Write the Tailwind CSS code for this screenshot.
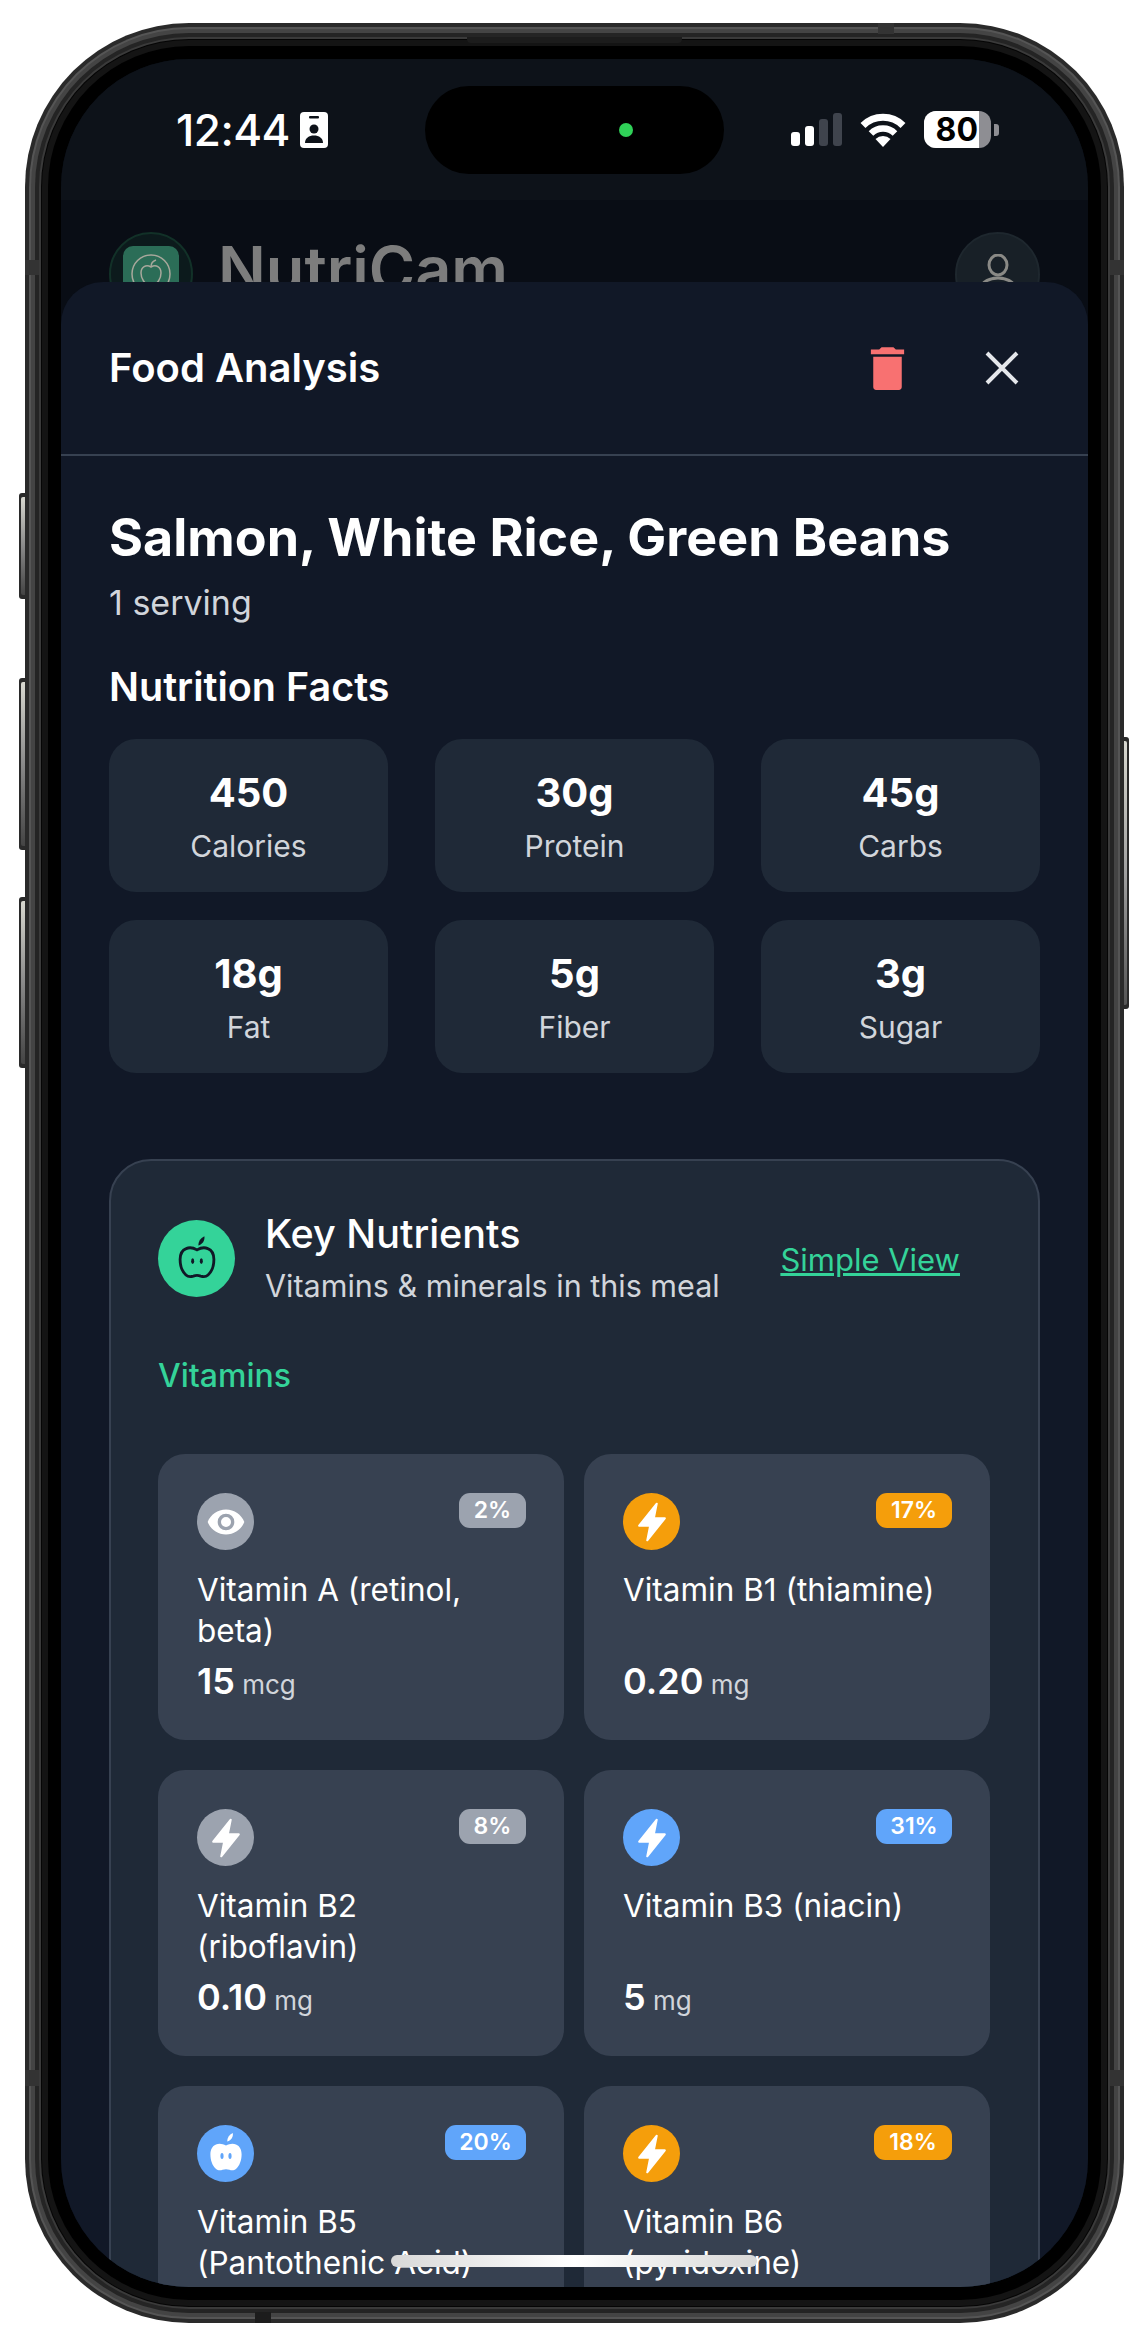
<!doctype html>
<html>
<head>
<meta charset="utf-8" />
<title>NutriCam</title>
<script src="https://cdn.jsdelivr.net/npm/@tailwindcss/browser@4"></script>
</head>
<body class="bg-white font-[family-name:Inter,sans-serif] w-[1148px] h-[2346px] overflow-hidden">
<div class="relative w-[1148px] h-[2346px] pl-[61px] pt-[59px]">

  <!-- side buttons -->
  <div class="absolute left-[19px] top-[493px] w-[8px] h-[106px] rounded-l-[3px] bg-[#2a2a2a] pl-[2px] py-[4px]"><div class="w-[5px] h-full rounded-l-[2px] bg-gradient-to-b from-[#d8d8d0] via-[#8a8a8a] to-[#444]"></div></div>
  <div class="absolute left-[19px] top-[678px] w-[8px] h-[172px] rounded-l-[3px] bg-[#2a2a2a] pl-[2px] py-[4px]"><div class="w-[5px] h-full rounded-l-[2px] bg-gradient-to-b from-[#d8d8d0] via-[#8a8a8a] to-[#444]"></div></div>
  <div class="absolute left-[19px] top-[897px] w-[8px] h-[171px] rounded-l-[3px] bg-[#2a2a2a] pl-[2px] py-[4px]"><div class="w-[5px] h-full rounded-l-[2px] bg-gradient-to-b from-[#d8d8d0] via-[#8a8a8a] to-[#444]"></div></div>
  <div class="absolute left-[1122px] top-[737px] w-[7px] h-[272px] rounded-r-[3px] bg-[#2a2a2a] pr-[2px] py-[4px]"><div class="w-[5px] h-full rounded-r-[2px] bg-gradient-to-b from-[#d8d8d0] via-[#a0a0a0] to-[#555]"></div></div>

  <!-- screen, the bezel is a stack of rings -->
  <div class="relative z-10 w-[1027px] h-[2228px] rounded-[128px] overflow-hidden bg-[#090d15] flex flex-col shadow-[0_0_0_13px_#000,0_0_0_19px_#141414,0_0_0_20px_#050505,0_0_0_22px_#3a3a3a,0_0_0_26px_#242424,0_0_0_30px_#444,0_0_0_32px_#555,0_0_0_36px_#2a2a2a]">

    <!-- status bar -->
    <div class="h-[141px] shrink-0 bg-[#0d1219] flex items-center justify-between pl-[115px] pr-[89px] text-white">
      <div class="flex items-center gap-[10px]">
        <span class="text-[44px] leading-none font-medium tracking-[-0.5px]">12:44</span>
        <svg class="w-[28px] h-[36px]" viewBox="0 0 28 36"><rect width="28" height="36" rx="4" fill="#fff"/><rect x="9" y="4" width="10" height="2.5" rx="1" fill="#0d1219"/><circle cx="14" cy="17" r="4.5" fill="#0d1219"/><path d="M5 31c0-5 4-7.500 9-7.500s9 2.500 9 7.500z" fill="#0d1219"/></svg>
      </div>
      <div class="flex items-center">
        <div class="flex items-end gap-[5px] h-[33px] mr-[18px]">
          <div class="w-[9px] h-[14px] rounded-[3px] bg-white"></div>
          <div class="w-[9px] h-[20px] rounded-[3px] bg-white"></div>
          <div class="w-[9px] h-[27px] rounded-[3px] bg-[#3f444d]"></div>
          <div class="w-[9px] h-[33px] rounded-[3px] bg-[#3f444d]"></div>
        </div>
        <svg class="w-[46px] h-[34px] mr-[18px]" viewBox="0 0 46 34" fill="none"><path d="M3 12.500A28.500 28.500 0 0 1 43 12.500" stroke="#fff" stroke-width="7"/><path d="M11 20.500A17 17 0 0 1 35 20.500" stroke="#fff" stroke-width="6.500"/><path d="M23 34L15.500 26A11 11 0 0 1 30.500 26z" fill="#fff"/></svg>
        <div class="flex items-center gap-[3px]">
          <div class="relative w-[67px] h-[37px] rounded-[12px] overflow-hidden bg-[#8e8e93]">
            <div class="w-[55px] h-full bg-white flex items-center justify-end pr-[1px]"><span class="text-[32px] leading-none font-bold text-black">80</span></div>
          </div>
          <div class="w-[5px] h-[12px] rounded-r-[3px] bg-[#8e8e93]"></div>
        </div>
      </div>
    </div>

    <!-- dynamic island -->
    <div class="absolute left-[364px] top-[27px] w-[299px] h-[88px] rounded-full bg-black z-20">
      <div class="absolute left-[194px] top-[37px] w-[14px] h-[14px] rounded-full bg-[#30d158]"></div>
    </div>

    <!-- app header behind the sheet -->
    <div class="h-[82px] shrink-0 overflow-hidden flex items-start justify-between px-[48px] pt-[32px]">
      <div class="flex items-start">
        <div class="w-[84px] h-[84px] rounded-full border-[2px] border-[#123128] bg-[#0c1a1c] flex items-center justify-center">
          <div class="w-[56px] h-[56px] rounded-[10px] bg-[#2b6d57] flex items-center justify-center">
            <svg class="w-[42px] h-[42px]" viewBox="0 0 42 42" fill="none" stroke="#a8a89c" stroke-width="1.500"><circle cx="21" cy="21" r="19"/><path d="M21 14c-5-3-10 0-10 6 0 6 4 11 7 11 1 0 2-.5 3-.5s2 .5 3 .5c3 0 7-5 7-11 0-6-5-9-10-6z"/><path d="M21 14c0-4 2-6 5-7"/></svg>
          </div>
        </div>
        <span class="ml-[25px] -mt-[3px] text-[63px] leading-[80px] font-semibold text-[#7d7d7d]">NutriCam</span>
      </div>
      <div class="w-[85px] h-[85px] rounded-full bg-[#182027] border-[2px] border-[#1e272e] flex justify-center pt-[20px]">
        <svg class="w-[50px] h-[60px]" viewBox="0 0 50 60" fill="none" stroke="#8a8a86" stroke-width="3"><ellipse cx="25" cy="11" rx="9" ry="10"/><path d="M6 40c0-10 8-16 19-16s19 6 19 16"/></svg>
      </div>
    </div>

    <!-- sheet -->
    <div class="flex-1 min-h-0 bg-[#111827] rounded-t-[42px] flex flex-col">
      <div class="h-[174px] shrink-0 border-b-[2px] border-[#374151] flex items-center justify-between pl-[48px] pr-[69px]">
        <h2 class="text-[40px] leading-[48px] font-semibold text-white">Food Analysis</h2>
        <div class="flex items-center gap-[69px]">
          <svg class="w-[57px] h-[57px]" viewBox="0 0 24 24" fill="#f87171"><path d="M6 19.800C6 20.500 6.500 21 7.200 21h9.600c.7 0 1.200-.5 1.200-1.200V7H6zM19 4h-3.500l-1-1h-5l-1 1H5v2h14z"/></svg>
          <svg class="w-[34px] h-[34px]" viewBox="0 0 34 34" fill="none" stroke="#e5e7eb" stroke-width="4"><path d="M2 2l30 30M32 2L2 32"/></svg>
        </div>
      </div>

      <div class="px-[48px]">
        <h1 class="mt-[52px] text-[52px] leading-[60px] font-bold text-white">Salmon, White Rice, Green Beans</h1>
        <p class="mt-[13px] text-[34px] leading-[44px] text-[#d1d5db]">1 serving</p>
        <h3 class="mt-[38px] text-[39.500px] leading-[48px] font-semibold text-white">Nutrition Facts</h3>

        <div class="mt-[28px] grid grid-cols-3 gap-x-[47px] gap-y-[28px]">
          <div class="h-[153px] rounded-[27px] bg-[#1f2937] flex flex-col items-center pt-[29px]"><span class="text-[40px] leading-[50px] font-bold text-white">450</span><span class="mt-[8px] text-[30px] leading-[40px] text-[#d1d5db]">Calories</span></div>
          <div class="h-[153px] rounded-[27px] bg-[#1f2937] flex flex-col items-center pt-[29px]"><span class="text-[40px] leading-[50px] font-bold text-white">30g</span><span class="mt-[8px] text-[30px] leading-[40px] text-[#d1d5db]">Protein</span></div>
          <div class="h-[153px] rounded-[27px] bg-[#1f2937] flex flex-col items-center pt-[29px]"><span class="text-[40px] leading-[50px] font-bold text-white">45g</span><span class="mt-[8px] text-[30px] leading-[40px] text-[#d1d5db]">Carbs</span></div>
          <div class="h-[153px] rounded-[27px] bg-[#1f2937] flex flex-col items-center pt-[29px]"><span class="text-[40px] leading-[50px] font-bold text-white">18g</span><span class="mt-[8px] text-[30px] leading-[40px] text-[#d1d5db]">Fat</span></div>
          <div class="h-[153px] rounded-[27px] bg-[#1f2937] flex flex-col items-center pt-[29px]"><span class="text-[40px] leading-[50px] font-bold text-white">5g</span><span class="mt-[8px] text-[30px] leading-[40px] text-[#d1d5db]">Fiber</span></div>
          <div class="h-[153px] rounded-[27px] bg-[#1f2937] flex flex-col items-center pt-[29px]"><span class="text-[40px] leading-[50px] font-bold text-white">3g</span><span class="mt-[8px] text-[30px] leading-[40px] text-[#d1d5db]">Sugar</span></div>
        </div>

        <!-- key nutrients -->
        <div class="mt-[86px] rounded-[42px] bg-[#1f2937] border-[2px] border-[#374151] pl-[47px] pr-[48px] pt-[59px] pb-[60px]">
          <div class="flex items-start">
            <div class="w-[77px] h-[77px] rounded-full bg-[#34d399] flex items-center justify-center shrink-0">
              <svg class="w-[52px] h-[52px]" viewBox="0 0 24 24" fill="none" stroke="#111827" stroke-width="1.300"><path d="M12 7.800c-1.700-1-3.400-1.300-5-.6C5 8 4.200 10 4.200 12.200c0 2.800 1 5.600 2.700 7.200 1.200 1.100 2.500.8 3.400.5 1.100-.4 2.300-.4 3.400 0 .9.3 2.200.6 3.400-.5 1.700-1.600 2.700-4.400 2.700-7.200 0-2.200-.8-4.200-2.800-5-1.600-.7-3.300-.4-5 .6z"/><path d="M12.600 5.800c0-1.900.9-3.400 2.800-4.300.3 1.900-.7 3.600-2.800 4.300z" fill="#111827" stroke="none"/><ellipse cx="10" cy="13" rx=".7" ry="1.300" fill="#111827" stroke="none"/><ellipse cx="14" cy="13" rx=".7" ry="1.300" fill="#111827" stroke="none"/></svg>
            </div>
            <div class="ml-[30px] -mt-[10px] flex-1">
              <h3 class="text-[39.500px] leading-[48px] font-medium text-white">Key Nutrients</h3>
              <p class="mt-[8px] text-[30.500px] leading-[40px] text-[#d1d5db]">Vitamins &amp; minerals in this meal</p>
            </div>
            <a class="mt-[20px] mr-[30px] text-[31px] leading-[40px] font-normal text-[#34d399] underline">Simple View</a>
          </div>

          <h4 class="mt-[50px] text-[32px] leading-[40px] font-medium text-[#34d399]">Vitamins</h4>

          <div class="mt-[58px] grid grid-cols-2 gap-x-[20px] gap-y-[30px]">
            <div class="h-[286px] rounded-[27px] bg-[#374151] pl-[39px] pr-[38px] pt-[39px]">
              <div class="flex items-start justify-between">
                <div class="w-[57px] h-[57px] rounded-full bg-[#9ca3af] flex items-center justify-center">
                  <svg class="w-[40px] h-[40px]" viewBox="0 0 24 24" fill="#fff"><path d="M12 4.500C7 4.500 2.700 7.600 1 12c1.700 4.400 6 7.500 11 7.500s9.300-3.100 11-7.500c-1.700-4.400-6-7.500-11-7.500zM12 17a5 5 0 1 1 0-10 5 5 0 0 1 0 10zm0-8a3 3 0 1 0 0 6 3 3 0 0 0 0-6z"/></svg>
                </div>
                <span class="h-[35px] w-[67px] rounded-[11px] bg-[#9ca3af] flex items-center justify-center text-[23px] font-semibold text-white">2%</span>
              </div>
              <p class="mt-[19px] pr-[8px] min-h-[82px] text-[31.500px] leading-[41px] text-white">Vitamin A (retinol, beta)</p>
              <p class="mt-[8px] text-[26px] leading-[44px] text-[#d1d5db]"><span class="text-[36px] font-semibold text-white">15</span> mcg</p>
            </div>
            <div class="h-[286px] rounded-[27px] bg-[#374151] pl-[39px] pr-[38px] pt-[39px]">
              <div class="flex items-start justify-between">
                <div class="w-[57px] h-[57px] rounded-full bg-[#f59e0b] flex items-center justify-center">
                  <svg class="w-[44px] h-[44px]" viewBox="0 0 24 24" fill="#fff" stroke="#fff" stroke-width="1.100" stroke-linejoin="round"><path d="M14.600 2 5 14h6l-1.600 8L19 10h-6z"/></svg>
                </div>
                <span class="h-[35px] w-[76px] rounded-[11px] bg-[#f59e0b] flex items-center justify-center text-[23px] font-semibold text-white">17%</span>
              </div>
              <p class="mt-[19px] pr-[8px] min-h-[82px] text-[31.500px] leading-[41px] text-white">Vitamin B1 (thiamine)</p>
              <p class="mt-[8px] text-[26px] leading-[44px] text-[#d1d5db]"><span class="text-[36px] font-semibold text-white">0.20</span> mg</p>
            </div>
            <div class="h-[286px] rounded-[27px] bg-[#374151] pl-[39px] pr-[38px] pt-[39px]">
              <div class="flex items-start justify-between">
                <div class="w-[57px] h-[57px] rounded-full bg-[#9ca3af] flex items-center justify-center">
                  <svg class="w-[44px] h-[44px]" viewBox="0 0 24 24" fill="#fff" stroke="#fff" stroke-width="1.100" stroke-linejoin="round"><path d="M14.600 2 5 14h6l-1.600 8L19 10h-6z"/></svg>
                </div>
                <span class="h-[35px] w-[67px] rounded-[11px] bg-[#9ca3af] flex items-center justify-center text-[23px] font-semibold text-white">8%</span>
              </div>
              <p class="mt-[19px] pr-[8px] min-h-[82px] text-[31.500px] leading-[41px] text-white">Vitamin B2 (riboflavin)</p>
              <p class="mt-[8px] text-[26px] leading-[44px] text-[#d1d5db]"><span class="text-[36px] font-semibold text-white">0.10</span> mg</p>
            </div>
            <div class="h-[286px] rounded-[27px] bg-[#374151] pl-[39px] pr-[38px] pt-[39px]">
              <div class="flex items-start justify-between">
                <div class="w-[57px] h-[57px] rounded-full bg-[#60a5fa] flex items-center justify-center">
                  <svg class="w-[44px] h-[44px]" viewBox="0 0 24 24" fill="#fff" stroke="#fff" stroke-width="1.100" stroke-linejoin="round"><path d="M14.600 2 5 14h6l-1.600 8L19 10h-6z"/></svg>
                </div>
                <span class="h-[35px] w-[76px] rounded-[11px] bg-[#60a5fa] flex items-center justify-center text-[23px] font-semibold text-white">31%</span>
              </div>
              <p class="mt-[19px] pr-[8px] min-h-[82px] text-[31.500px] leading-[41px] text-white">Vitamin B3 (niacin)</p>
              <p class="mt-[8px] text-[26px] leading-[44px] text-[#d1d5db]"><span class="text-[36px] font-semibold text-white">5</span> mg</p>
            </div>
            <div class="h-[286px] rounded-[27px] bg-[#374151] pl-[39px] pr-[38px] pt-[39px]">
              <div class="flex items-start justify-between">
                <div class="w-[57px] h-[57px] rounded-full bg-[#60a5fa] flex items-center justify-center">
                  <svg class="w-[48px] h-[48px]" viewBox="0 0 24 24" fill="#fff"><path d="M12 7.800c-1.700-1-3.400-1.300-5-.6C5 8 4.200 10 4.200 12.200c0 2.800 1 5.600 2.700 7.200 1.200 1.100 2.500.8 3.400.5 1.100-.4 2.300-.4 3.400 0 .9.300 2.200.6 3.400-.5 1.700-1.600 2.700-4.400 2.700-7.200 0-2.200-.8-4.200-2.800-5-1.600-.7-3.300-.4-5 .6z"/><path d="M12.600 5.800c0-1.900.9-3.400 2.800-4.300.3 1.900-.7 3.600-2.800 4.300z"/><ellipse cx="10" cy="13" rx=".8" ry="1.500" fill="#60a5fa"/><ellipse cx="14" cy="13" rx=".8" ry="1.500" fill="#60a5fa"/></svg>
                </div>
                <span class="h-[35px] w-[81px] rounded-[11px] bg-[#60a5fa] flex items-center justify-center text-[23px] font-semibold text-white">20%</span>
              </div>
              <p class="mt-[19px] pr-[8px] min-h-[82px] text-[31.500px] leading-[41px] text-white">Vitamin B5 (Pantothenic Acid)</p>
            </div>
            <div class="h-[286px] rounded-[27px] bg-[#374151] pl-[39px] pr-[38px] pt-[39px]">
              <div class="flex items-start justify-between">
                <div class="w-[57px] h-[57px] rounded-full bg-[#f59e0b] flex items-center justify-center">
                  <svg class="w-[44px] h-[44px]" viewBox="0 0 24 24" fill="#fff" stroke="#fff" stroke-width="1.100" stroke-linejoin="round"><path d="M14.600 2 5 14h6l-1.600 8L19 10h-6z"/></svg>
                </div>
                <span class="h-[35px] w-[78px] rounded-[11px] bg-[#f59e0b] flex items-center justify-center text-[23px] font-semibold text-white">18%</span>
              </div>
              <p class="mt-[19px] pr-[8px] min-h-[82px] text-[31.500px] leading-[41px] text-white">Vitamin B6 (pyridoxine)</p>
            </div>
          </div>
        </div>
      </div>
    </div>

    <!-- home indicator -->
    <div class="absolute left-[330px] top-[2196px] w-[366px] h-[12px] rounded-full bg-gradient-to-r from-[#d8d8d8] via-white to-[#d8d8d8] z-20"></div>
  </div>

  <!-- antenna bands and speaker slit over the frame -->
  <div class="absolute z-20 left-[467px] top-[37px] w-[215px] h-[6px] rounded-b-[4px] bg-[#1c1c1c]"></div>
  <div class="absolute z-20 left-[878px] top-[23px] w-[16px] h-[11px] bg-[#333]"></div>
  <div class="absolute z-20 left-[255px] top-[2312px] w-[16px] h-[11px] bg-[#1c1c1c]"></div>
  <div class="absolute z-20 left-[25px] top-[260px] w-[14px] h-[15px] bg-[#333]"></div>
  <div class="absolute z-20 left-[1110px] top-[260px] w-[14px] h-[15px] bg-[#333]"></div>
  <div class="absolute z-20 left-[25px] top-[2070px] w-[14px] h-[16px] bg-[#333]"></div>
  <div class="absolute z-20 left-[1110px] top-[2070px] w-[14px] h-[16px] bg-[#333]"></div>
</div>
</body>
</html>
